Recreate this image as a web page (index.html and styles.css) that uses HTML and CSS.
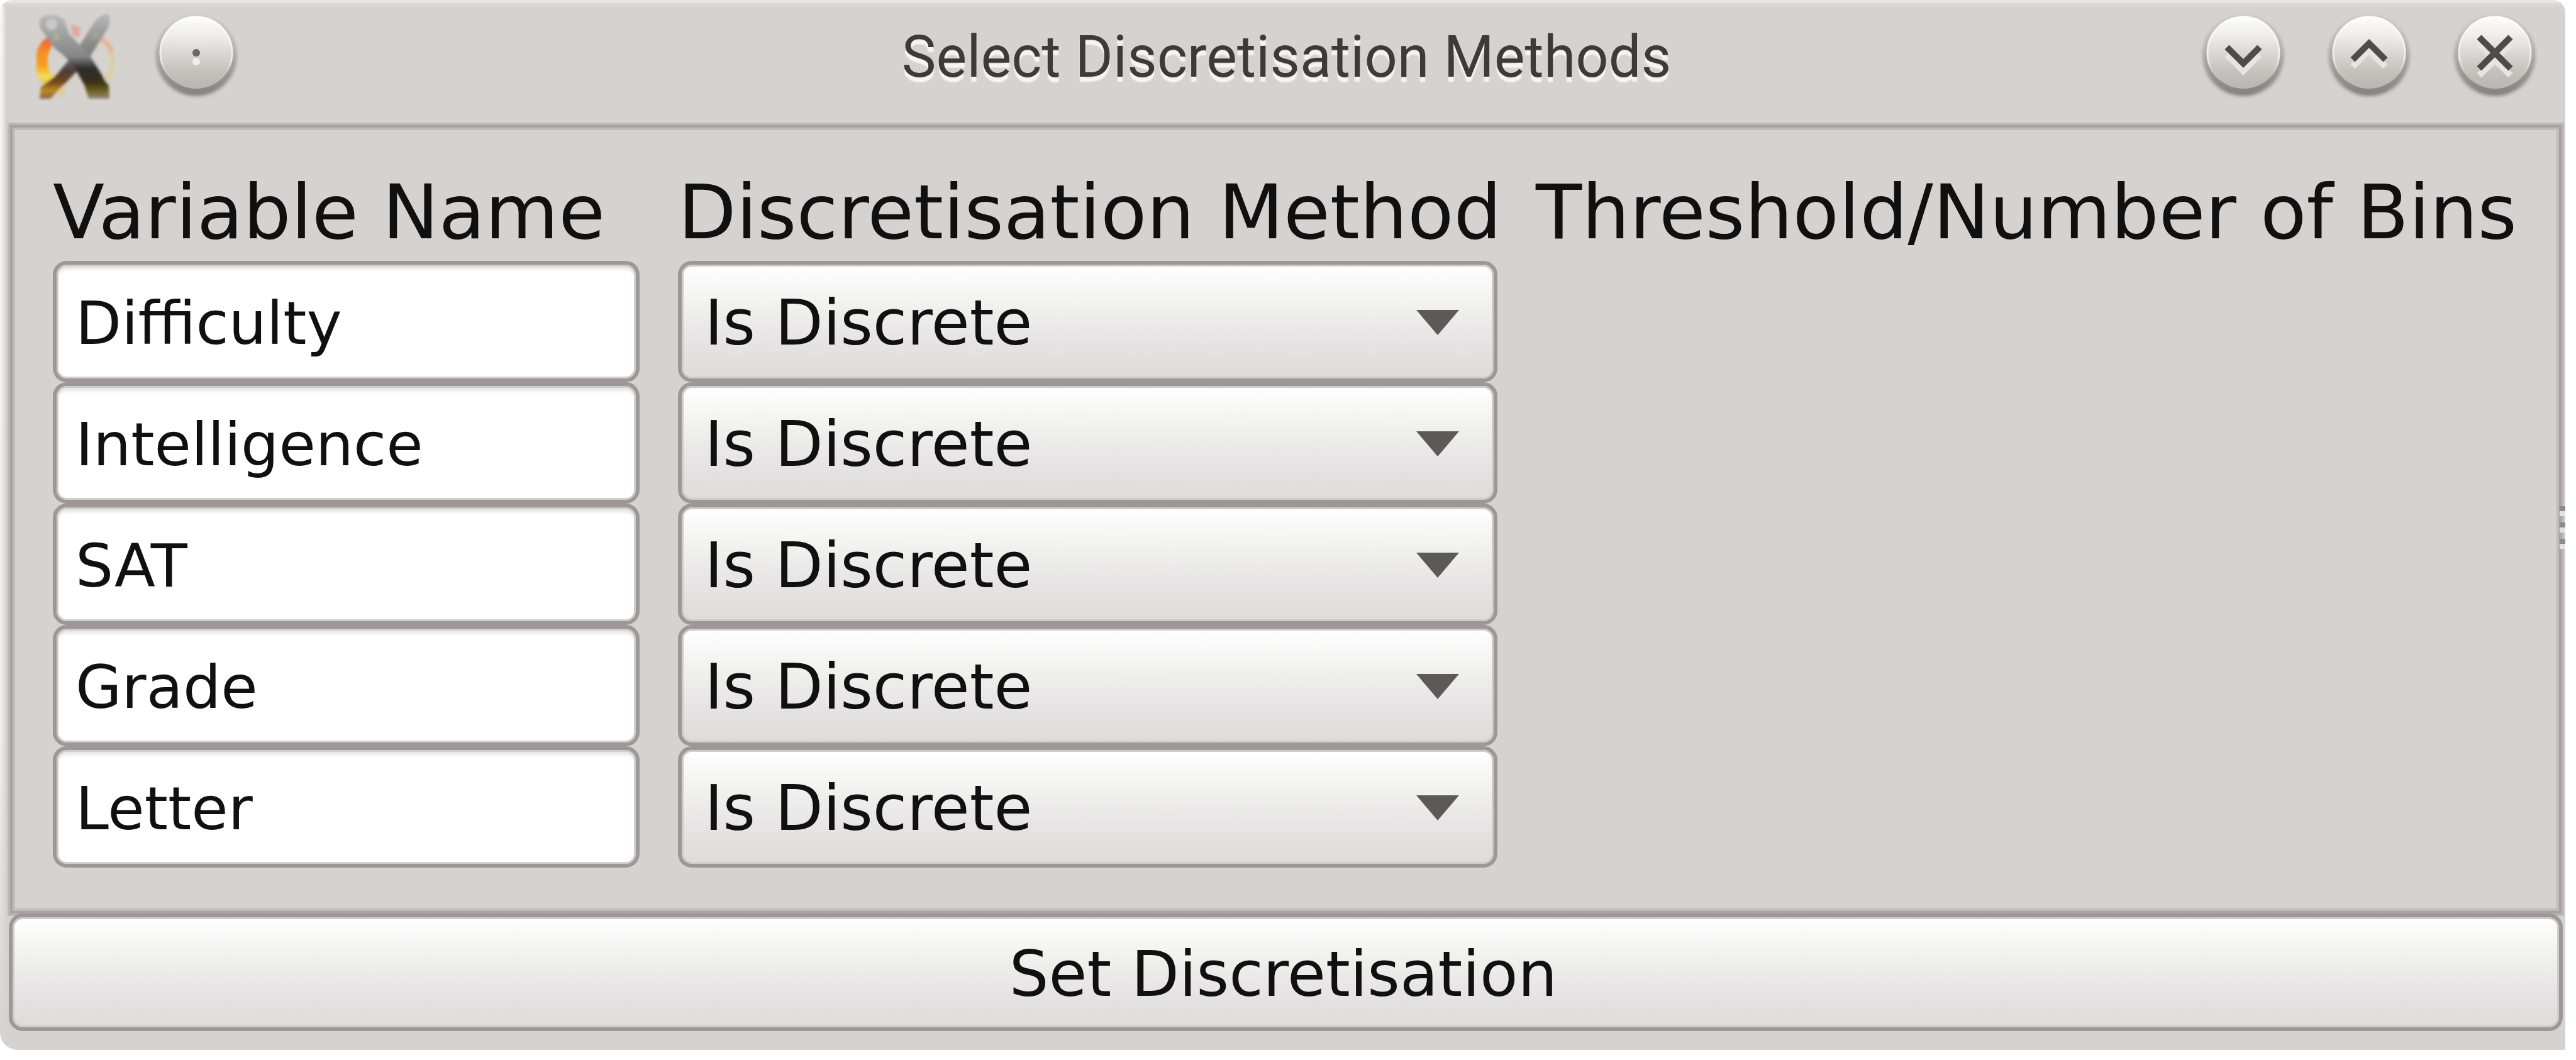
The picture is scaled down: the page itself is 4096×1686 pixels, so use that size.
FILE: index.html
```html
<!DOCTYPE html>
<html lang="en">
<head>
<meta charset="utf-8">
<title>Select Discretisation Methods</title>
<link rel="stylesheet" href="styles.css">
</head>
<body>
<svg class="defs" aria-hidden="true">
  <defs>
    <linearGradient id="ball" x1="0" y1="0" x2="0" y2="1">
      <stop offset="0" stop-color="#fdfdfb"/><stop offset=".25" stop-color="#efeeed"/>
      <stop offset=".5" stop-color="#dad8d6"/><stop offset=".75" stop-color="#c5c2bd"/>
      <stop offset="1" stop-color="#b9b5b2"/>
    </linearGradient>
    <linearGradient id="rim" x1="0" y1="0" x2="0" y2="1">
      <stop offset="0" stop-color="#d3cfcc"/><stop offset=".5" stop-color="#aca8a5"/>
      <stop offset="1" stop-color="#84807d"/>
    </linearGradient>
    <linearGradient id="edge" x1="0" y1="0" x2="0" y2="1">
      <stop offset="0" stop-color="#ffffff"/><stop offset=".6" stop-color="#eceae9"/>
      <stop offset="1" stop-color="#bbb7b4" stop-opacity="0"/>
    </linearGradient>
    <linearGradient id="bladeA" gradientUnits="userSpaceOnUse" x1="0" y1="2" x2="0" y2="136">
      <stop offset="0" stop-color="#b8b8b8"/><stop offset=".5" stop-color="#868686"/>
      <stop offset=".64" stop-color="#2e2c2a"/><stop offset=".8" stop-color="#3a2f1c"/>
      <stop offset=".9" stop-color="#6a5e1a"/><stop offset="1" stop-color="#93897c"/>
    </linearGradient>
    <linearGradient id="bladeB" gradientUnits="userSpaceOnUse" x1="0" y1="2" x2="0" y2="136">
      <stop offset="0" stop-color="#b8b8b8"/><stop offset=".5" stop-color="#7a7876"/>
      <stop offset=".66" stop-color="#4c403a"/><stop offset=".8" stop-color="#6d4420"/>
      <stop offset=".9" stop-color="#c08824"/><stop offset="1" stop-color="#84664a"/>
    </linearGradient>
    <linearGradient id="flame" x1="0" y1="0" x2="0" y2="1">
      <stop offset="0" stop-color="#e0563f"/><stop offset=".3" stop-color="#f58a28"/>
      <stop offset=".6" stop-color="#f9a21c"/><stop offset=".8" stop-color="#f4de58"/>
      <stop offset="1" stop-color="#dcb03a"/>
    </linearGradient>
    <filter id="soft" x="-20%" y="-20%" width="140%" height="140%"><feGaussianBlur stdDeviation="2"/></filter>
    <g id="knob">
      <circle cx="70" cy="69" r="66" fill="#bdb9b6" filter="url(#soft)" opacity=".6"/>
      <circle cx="70" cy="67" r="64" fill="url(#rim)" filter="url(#soft)"/>
      <circle cx="70" cy="63" r="57" fill="url(#ball)" stroke="url(#edge)" stroke-width="3"/>
    </g>
  </defs>
</svg>

<main class="window">
  <header class="titlebar">
    <div class="titlebar-side">
      <svg class="logo" viewBox="0 0 128 140" role="img" aria-label="Application">
        <g filter="url(#soft)">
          <path d="M107 42Q126 52 125 76T113 106" fill="none" stroke="#dccfa4" stroke-width="8"/>
          <path d="M106 41Q120 48 124 62" fill="none" stroke="#e5b394" stroke-width="7"/>
          <path d="M58 17L74 23L72 38L62 36Z" fill="#deaa9c"/>
          <path d="M42 111L49 116L47 134L39 132Z" fill="#dacd96"/>
          <path d="M28 34Q7 46 4 64L4 96Q9 107 17 114L34 118L38 106L24 92Q20 80 23 64L31 46Z" fill="url(#flame)"/>
          <path d="M119 2Q123 16 115 28L86 74L26 136L9 136L11 118L36 98L66 62L96 14Q107 0 119 2Z" fill="url(#bladeB)"/>
          <path d="M13 5Q36 -1 48 10L56 33L88 66L119 116L120 136L87 136L80 114L63 84L46 66L32 55L11 25Q6 14 13 5Z" fill="url(#bladeA)"/>
          <ellipse cx="28" cy="18" rx="9" ry="9" fill="#cacaca"/>
          <path d="M31 32L41 34L38 44L31 42Z" fill="#adaf95"/>
          <path d="M94 31L104 33L98 42L92 40Z" fill="#a4a68c"/>
        </g>
      </svg>
      <button class="knob" type="button" aria-label="Window menu">
        <svg viewBox="0 0 140 140"><use href="#knob"/>
          <circle cx="70" cy="77" r="6" fill="#efeeec"/><circle cx="70" cy="63" r="6" fill="#6a6764"/></svg>
      </button>
    </div>
    <h1 class="title">Select Discretisation Methods</h1>
    <div class="titlebar-side titlebar-end">
      <button class="knob" type="button" aria-label="Minimise">
        <svg viewBox="0 0 140 140"><use href="#knob"/>
          <path class="glyph-light" d="M44 66L70 92L96 66"/><path class="glyph" d="M44 54L70 80L96 54"/></svg>
      </button>
      <button class="knob" type="button" aria-label="Maximise">
        <svg viewBox="0 0 140 140"><use href="#knob"/>
          <path class="glyph-light" d="M44 85L70 59L96 85"/><path class="glyph" d="M44 74L70 48L96 74"/></svg>
      </button>
      <button class="knob" type="button" aria-label="Close">
        <svg viewBox="0 0 140 140"><use href="#knob"/>
          <path class="glyph-light" d="M45 49L95 99M95 49L45 99"/><path class="glyph" d="M45 38L95 88M95 38L45 88"/></svg>
      </button>
    </div>
  </header>

  <section class="panel">
    <table class="methods">
      <colgroup><col class="col-name"><col class="col-method"><col></colgroup>
      <thead>
        <tr><th id="h-name" scope="col">Variable Name</th><th id="h-method" scope="col">Discretisation Method</th><th scope="col">Threshold/Number of Bins</th></tr>
      </thead>
      <tbody>
        <tr>
          <td><input class="field" type="text" value="Difficulty" aria-labelledby="h-name"></td>
          <td><div class="combo"><select aria-labelledby="h-method"><option>Is Discrete</option></select></div></td><td></td>
        </tr>
        <tr>
          <td><input class="field" type="text" value="Intelligence" aria-labelledby="h-name"></td>
          <td><div class="combo"><select aria-labelledby="h-method"><option>Is Discrete</option></select></div></td><td></td>
        </tr>
        <tr>
          <td><input class="field" type="text" value="SAT" aria-labelledby="h-name"></td>
          <td><div class="combo"><select aria-labelledby="h-method"><option>Is Discrete</option></select></div></td><td></td>
        </tr>
        <tr>
          <td><input class="field" type="text" value="Grade" aria-labelledby="h-name"></td>
          <td><div class="combo"><select aria-labelledby="h-method"><option>Is Discrete</option></select></div></td><td></td>
        </tr>
        <tr>
          <td><input class="field" type="text" value="Letter" aria-labelledby="h-name"></td>
          <td><div class="combo"><select aria-labelledby="h-method"><option>Is Discrete</option></select></div></td><td></td>
        </tr>
      </tbody>
    </table>
  </section>

  <button class="submit" type="button">Set Discretisation</button>
  <div class="grip" aria-hidden="true"><i></i><i></i><i></i></div>
</main>
</body>
</html>
```
FILE: styles.css
```css
* { box-sizing: border-box; }

body {
  margin: 0;
  padding: 0 17px 16px 0;
  background: #fff;
  color: #101010;
  font-family: "DejaVu Sans", sans-serif;
}

.defs { position: absolute; width: 0; height: 0; }

.window {
  position: relative;
  display: flex;
  flex-direction: column;
  padding: 0 2px 30px 12px;
  border-radius: 20px 20px 0 28px;
  background:
    linear-gradient(#e7e4e2, #e7e4e2) top / 100% 5px no-repeat,
    linear-gradient(#dad7d5, #dad7d5) top / 100% 10px no-repeat,
    linear-gradient(#f5f4f4, #eeecec 70%, #d6d2cf) left / 4px 100% no-repeat,
    linear-gradient(#e6e4e2, #e2dfdd 70%, #d6d2cf) left / 8px 100% no-repeat,
    #d6d2cf;
}

.titlebar {
  display: grid;
  grid-template-columns: 1fr auto 1fr;
  align-items: center;
  padding: 21px 40px 34px 42px;
}

.titlebar-side { display: flex; align-items: center; gap: 60px; }
.titlebar-end { justify-content: flex-end; }

.logo { width: 128px; height: 140px; }

.knob {
  width: 140px;
  height: 140px;
  padding: 0;
  border: 0;
  background: none;
}
.knob svg { display: block; width: 100%; height: 100%; overflow: visible; }

.glyph, .glyph-light { fill: none; stroke-width: 10px; }
.glyph { stroke: #4f4b49; }
.glyph-light { stroke: #e7e5e3; }

.title {
  margin: 0;
  color: #3f3a38;
  font: 400 92px/140px Roboto, sans-serif;
  text-shadow: 0 8px 2px #f6f5f4;
  white-space: nowrap;
}

.panel {
  padding: 73px 63px 77px 72px;
  box-shadow:
    inset 0 0 0 4px #bdb8b5,
    inset 0 0 0 8px #a8a3a1,
    inset 0 0 0 12px #c1bcba;
}

.methods {
  width: 100%;
  table-layout: fixed;
  border-collapse: collapse;
}
.col-name { width: 25.3%; }
.col-method { width: 34.7%; }

th {
  padding: 0 0 7px;
  font-size: 120px;
  font-weight: 400;
  line-height: 140px;
  text-align: left;
  white-space: nowrap;
}
td { padding: 0 61px 0 0; }

.field, .combo select, .submit {
  display: block;
  width: 100%;
  height: 193px;
  margin: 0;
  border: 6px solid #9d9896;
  border-radius: 22px;
  color: #101010;
  font-family: inherit;
}

.field {
  padding: 4px 30px 0;
  background: #fff;
  box-shadow: inset 0 0 0 3px #d0cecd, inset 0 8px 4px #e8e8e8;
  font-size: 95px;
}

.combo { position: relative; }
.combo select, .submit {
  background: linear-gradient(#fff, #f1f1f0 35%, #e5e3e3 70%, #dddcda);
  box-shadow: inset 0 0 0 3px #cfcdcb;
  font-size: 99px;
}
.combo select {
  padding: 4px 120px 0 36px;
  appearance: none;
}
.combo::after {
  content: "";
  position: absolute;
  top: 78px;
  right: 61px;
  width: 68px;
  height: 40px;
  background: #5b5a59;
  clip-path: polygon(0 0, 100% 0, 50% 100%);
  pointer-events: none;
}

/* The button's top edge covers the lower edge of the panel frame */
.submit {
  width: auto;
  height: 187px;
  margin: -4px 2px 0;
  padding: 6px 8px 0 0;
  text-align: center;
}

/* Resize grip on the right-hand frame edge */
.grip {
  position: absolute;
  top: 50%;
  right: 0;
  display: grid;
  gap: 18px;
  transform: translateY(-50%);
}
.grip i { width: 9px; height: 8px; background: #8e8a87; box-shadow: 0 8px #e4e2e0; }
```
